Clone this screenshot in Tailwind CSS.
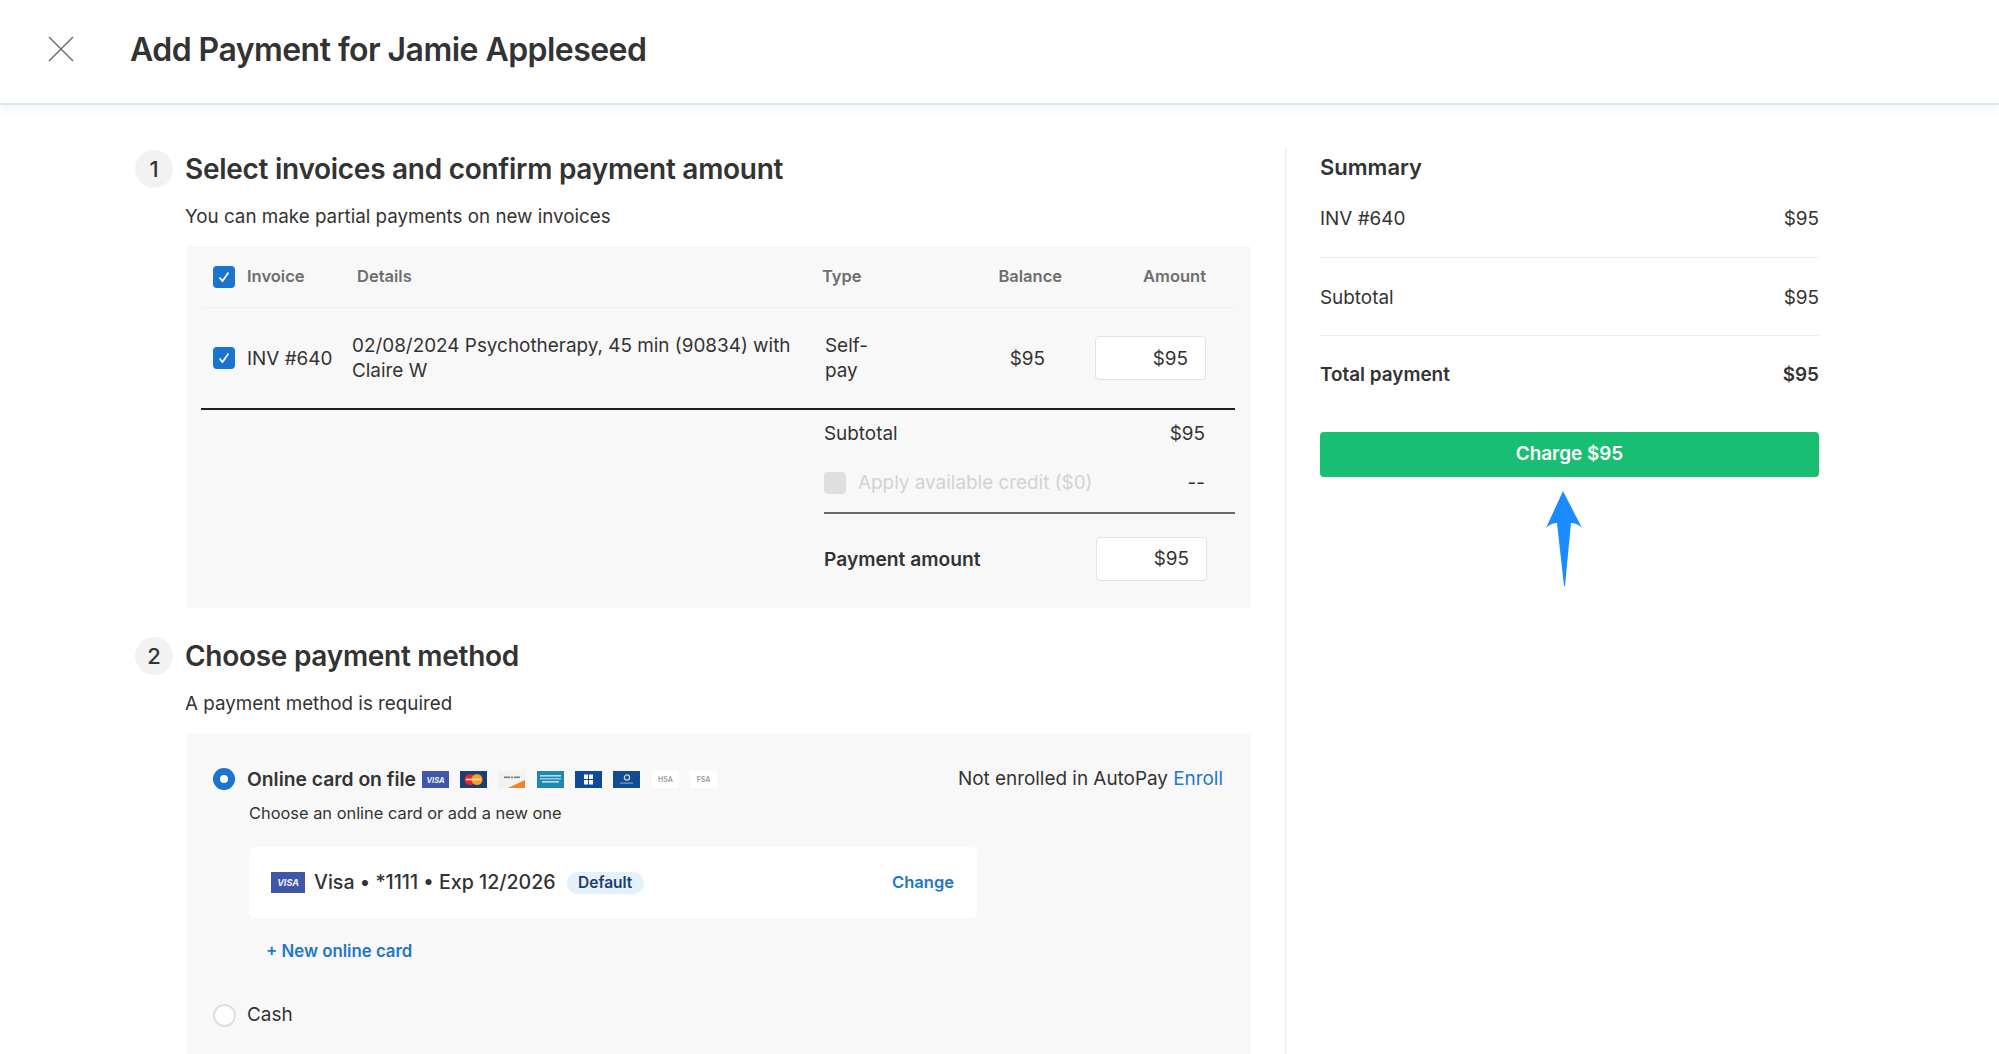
<!DOCTYPE html>
<html lang="en">
<head>
  <meta charset="UTF-8" />
  <title>Add Payment</title>
  <script src="https://cdn.jsdelivr.net/npm/@tailwindcss/browser@4"></script>
</head>
<body class="bg-white text-[#333333] font-['Inter','Liberation_Sans',sans-serif] h-[1054px] overflow-hidden">

  <!-- Header -->
  <header class="h-[105px] pb-[4px] flex items-center border-b-2 border-[#dfe5ec] shadow-[0_4px_10px_rgba(200,212,226,0.25)]">
    <svg class="ml-[48px] mb-[2px] w-[26px] h-[26px]" viewBox="0 0 26 26" fill="none" stroke="#6f6f6f" stroke-width="1.5"><path d="M1 1l24 24M25 1L1 25"/></svg>
    <h1 class="ml-[56px] text-[32px] font-semibold tracking-[-0.55px] leading-none">Add Payment for Jamie Appleseed</h1>
  </header>

  <main class="flex pt-[45px] pl-[135px]">
    <!-- Left column -->
    <div class="w-[1116px] shrink-0">
      <div class="flex items-center">
        <div class="w-[38px] h-[38px] rounded-full bg-[#f2f2f2] flex items-center justify-center text-[22px] font-medium">1</div>
        <h2 class="ml-[12px] text-[28px] font-semibold tracking-[-0.28px] leading-none">Select invoices and confirm payment amount</h2>
      </div>
      <p class="ml-[50px] mt-[17px] text-[18.8px] leading-[24px]">You can make partial payments on new invoices</p>

      <div class="ml-[51px] mt-[17px] w-[1065px] h-[362px] bg-[#f8f8f8] rounded-[4px] pl-[15px] pr-[16px]">
        <!-- Table head -->
        <div class="grid grid-cols-[151px_470px_168px_72px_144px] items-center h-[62px] border-b border-[#f0f0f0] text-[16.5px] font-semibold text-[#6e6e6e]">
          <div class="flex items-center pl-[12px]">
            <span class="w-[22px] h-[22px] rounded-[4px] bg-[#1a73cf] flex items-center justify-center"><svg class="w-[14px] h-[14px]" viewBox="0 0 14 14" fill="none" stroke="#fff" stroke-width="1.8"><path d="M2.5 7.5l3 3.5 6-8.5"/></svg></span>
            <span class="ml-[12px]">Invoice</span>
          </div>
          <div class="pl-[5px]">Details</div>
          <div>Type</div>
          <div class="text-right">Balance</div>
          <div class="text-right">Amount</div>
        </div>
        <!-- Invoice row -->
        <div class="grid grid-cols-[151px_470px_168px_72px_144px] items-center h-[100px] text-[18.9px] leading-[25px]">
          <div class="flex items-center pl-[12px]">
            <span class="w-[22px] h-[22px] rounded-[4px] bg-[#1a73cf] flex items-center justify-center"><svg class="w-[14px] h-[14px]" viewBox="0 0 14 14" fill="none" stroke="#fff" stroke-width="1.8"><path d="M2.5 7.5l3 3.5 6-8.5"/></svg></span>
            <span class="ml-[12px]">INV #640</span>
          </div>
          <div class="w-[450px]">02/08/2024 Psychotherapy, 45 min (90834) with Claire W</div>
          <div class="pl-[3px] w-[70px]">Self-<br>pay</div>
          <div class="text-right pr-[17px]">$95</div>
          <div class="flex justify-end">
            <div class="w-[111px] h-[44px] bg-white border border-[#e2e2e2] rounded-[4px] flex items-center justify-end pr-[17px]">$95</div>
          </div>
        </div>
        <div class="h-[2px] bg-[#1f1f1f]"></div>
        <!-- Totals -->
        <div class="ml-[623px] text-[18.9px]">
          <div class="flex items-center justify-between h-[48px] pr-[30px]">
            <span>Subtotal</span><span>$95</span>
          </div>
          <div class="flex items-center justify-between h-[50px] pr-[30px]">
            <span class="flex items-center text-[#d2d2d2]"><span class="w-[22px] h-[22px] rounded-[4px] bg-[#dfdfdf] mr-[12px]"></span>Apply available credit ($0)</span>
            <span>--</span>
          </div>
          <div class="h-[2px] bg-[#6a6a6a] mt-[4px]"></div>
          <div class="flex items-center justify-between h-[44px] mt-[23px] pr-[28px]">
            <span class="font-semibold text-[19.2px]">Payment amount</span>
            <div class="w-[111px] h-[44px] bg-white border border-[#e2e2e2] rounded-[4px] flex items-center justify-end pr-[17px]">$95</div>
          </div>
        </div>
      </div>

      <div class="flex items-center mt-[29px]">
        <div class="w-[38px] h-[38px] rounded-full bg-[#f2f2f2] flex items-center justify-center text-[22px] font-medium">2</div>
        <h2 class="ml-[12px] text-[28px] font-semibold tracking-[-0.28px] leading-none">Choose payment method</h2>
      </div>
      <p class="ml-[50px] mt-[17px] text-[18.8px] leading-[24px]">A payment method is required</p>

      <div class="ml-[51px] mt-[17px] w-[1065px] h-[330px] bg-[#f8f8f8] rounded-t-[4px] pl-[27px] pr-[28px] pt-[34px]">
        <div class="flex items-center h-[24px]">
          <span class="w-[22px] h-[22px] rounded-full bg-[#1a73cf] flex items-center justify-center"><span class="w-[8px] h-[8px] rounded-full bg-white"></span></span>
          <span class="ml-[12px] text-[19.3px] font-semibold">Online card on file</span>
          <div class="flex ml-[6px] gap-[11.3px]">
            <svg class="w-[27px] h-[17px]" viewBox="0 0 27 17"><rect width="27" height="17" fill="#3f57a6"/><text x="13.5" y="11.5" font-size="7.5" font-weight="700" font-style="italic" fill="#eef0f8" text-anchor="middle">VISA</text></svg>
            <svg class="w-[27px] h-[17px]" viewBox="0 0 27 17"><rect width="27" height="17" fill="#1c3f73"/><circle cx="10" cy="8.5" r="5.5" fill="#e3262e"/><circle cx="17" cy="8.5" r="5.5" fill="#f6a21e"/><rect x="6" y="7.6" width="15" height="1.8" fill="#f4d9c0"/></svg>
            <svg class="w-[27px] h-[17px]" viewBox="0 0 27 17"><rect width="27" height="17" fill="#f1f2f2"/><path d="M27 9v8H10z" fill="#f0822a"/><rect x="6" y="5.5" width="6" height="1.6" fill="#7a7a7a"/><circle cx="14" cy="6.3" r="1.2" fill="#ee8a34"/><rect x="16" y="5.5" width="6" height="1.6" fill="#7a7a7a"/></svg>
            <svg class="w-[27px] h-[17px]" viewBox="0 0 27 17"><rect width="27" height="17" fill="#1e88b3"/><rect x="3" y="4" width="21" height="1.6" fill="#b9dfee"/><rect x="3" y="7" width="21" height="1.6" fill="#8fc9e0"/><rect x="5" y="10" width="17" height="1.6" fill="#b9dfee"/></svg>
            <svg class="w-[27px] h-[17px]" viewBox="0 0 27 17"><rect width="27" height="17" fill="#10499c"/><rect x="9" y="3.5" width="4" height="4.5" fill="#fff"/><rect x="14" y="3.5" width="4" height="4.5" fill="#fff"/><rect x="9" y="9" width="4" height="4.5" fill="#fff"/><rect x="14" y="9" width="4" height="4.5" fill="#fff"/></svg>
            <svg class="w-[27px] h-[17px]" viewBox="0 0 27 17"><rect width="27" height="17" fill="#124b8f"/><circle cx="14" cy="6.5" r="2.6" fill="none" stroke="#c7d6ea" stroke-width="1.2"/><rect x="7" y="11.5" width="13" height="1.2" fill="#7f9cc4"/></svg>
            <svg class="w-[27px] h-[17px]" viewBox="0 0 27 17"><rect width="27" height="17" fill="#fff"/><text x="13.5" y="11" font-size="7" font-weight="600" fill="#9a9a9a" text-anchor="middle">HSA</text></svg>
            <svg class="w-[27px] h-[17px]" viewBox="0 0 27 17"><rect width="27" height="17" fill="#fff"/><text x="13.5" y="11" font-size="7" font-weight="600" fill="#9a9a9a" text-anchor="middle">FSA</text></svg>
          </div>
          <span class="ml-auto text-[18.9px]">Not enrolled in AutoPay <span class="text-[#1f76cf]">Enroll</span></span>
        </div>
        <p class="ml-[36px] mt-[12px] text-[16.4px] leading-[20px]">Choose an online card or add a new one</p>

        <div class="ml-[36px] mt-[24px] w-[728px] h-[71px] bg-white rounded-[6px] flex items-center pl-[22px] pr-[23px]">
          <svg class="w-[34px] h-[21px]" viewBox="0 0 34 21"><rect width="34" height="21" fill="#3f57a6"/><text x="17" y="14" font-size="9" font-weight="700" font-style="italic" fill="#eef0f8" text-anchor="middle">VISA</text></svg>
          <span class="ml-[9px] text-[19.6px] font-medium">Visa • *1111 • Exp 12/2026</span>
          <span class="ml-[11px] w-[77px] h-[22px] rounded-full bg-[#e5f1fa] text-[#1b3f6b] text-[15.5px] font-semibold flex items-center justify-center">Default</span>
          <span class="ml-auto text-[16.5px] font-semibold text-[#1f76cf]">Change</span>
        </div>

        <div class="ml-[53px] mt-[23px] text-[16.8px] leading-[20px] font-semibold text-[#1f76cf]">+ New online card</div>

        <div class="flex items-center mt-[40px]">
          <span class="w-[23px] h-[23px] rounded-full bg-white border-2 border-[#dedede]"></span>
          <span class="ml-[11px] text-[18.9px]">Cash</span>
        </div>
      </div>
    </div>

    <!-- Summary -->
    <aside class="-mt-[2px] ml-[34px] w-[535px] h-[906px] border-l-2 border-[#f0f0f0] pl-[33px] text-[18.9px]">
      <div class="w-[499px]">
        <h3 class="text-[22px] font-semibold leading-[38px]">Summary</h3>
        <div class="flex justify-between items-center h-[72px] pb-[4px] border-b border-[#eeeeee]">
          <span>INV #640</span><span>$95</span>
        </div>
        <div class="flex justify-between items-center h-[78px] pt-[3px] border-b border-[#eeeeee]">
          <span>Subtotal</span><span>$95</span>
        </div>
        <div class="flex justify-between items-center h-[78px] font-semibold">
          <span>Total payment</span><span>$95</span>
        </div>
        <div class="mt-[18px] h-[45px] rounded-[4px] bg-[#18bf73] text-white font-semibold flex items-center justify-center">Charge $95</div>
        <svg class="mt-[14px] ml-[226px] w-[36px] h-[96px]" viewBox="0 0 36 96" fill="#1a8cff"><path d="M17 0L36 37Q31 32 25 32L19 95H18L11 32Q5 32 0 37Z"/></svg>
      </div>
    </aside>
  </main>
</body>
</html>
